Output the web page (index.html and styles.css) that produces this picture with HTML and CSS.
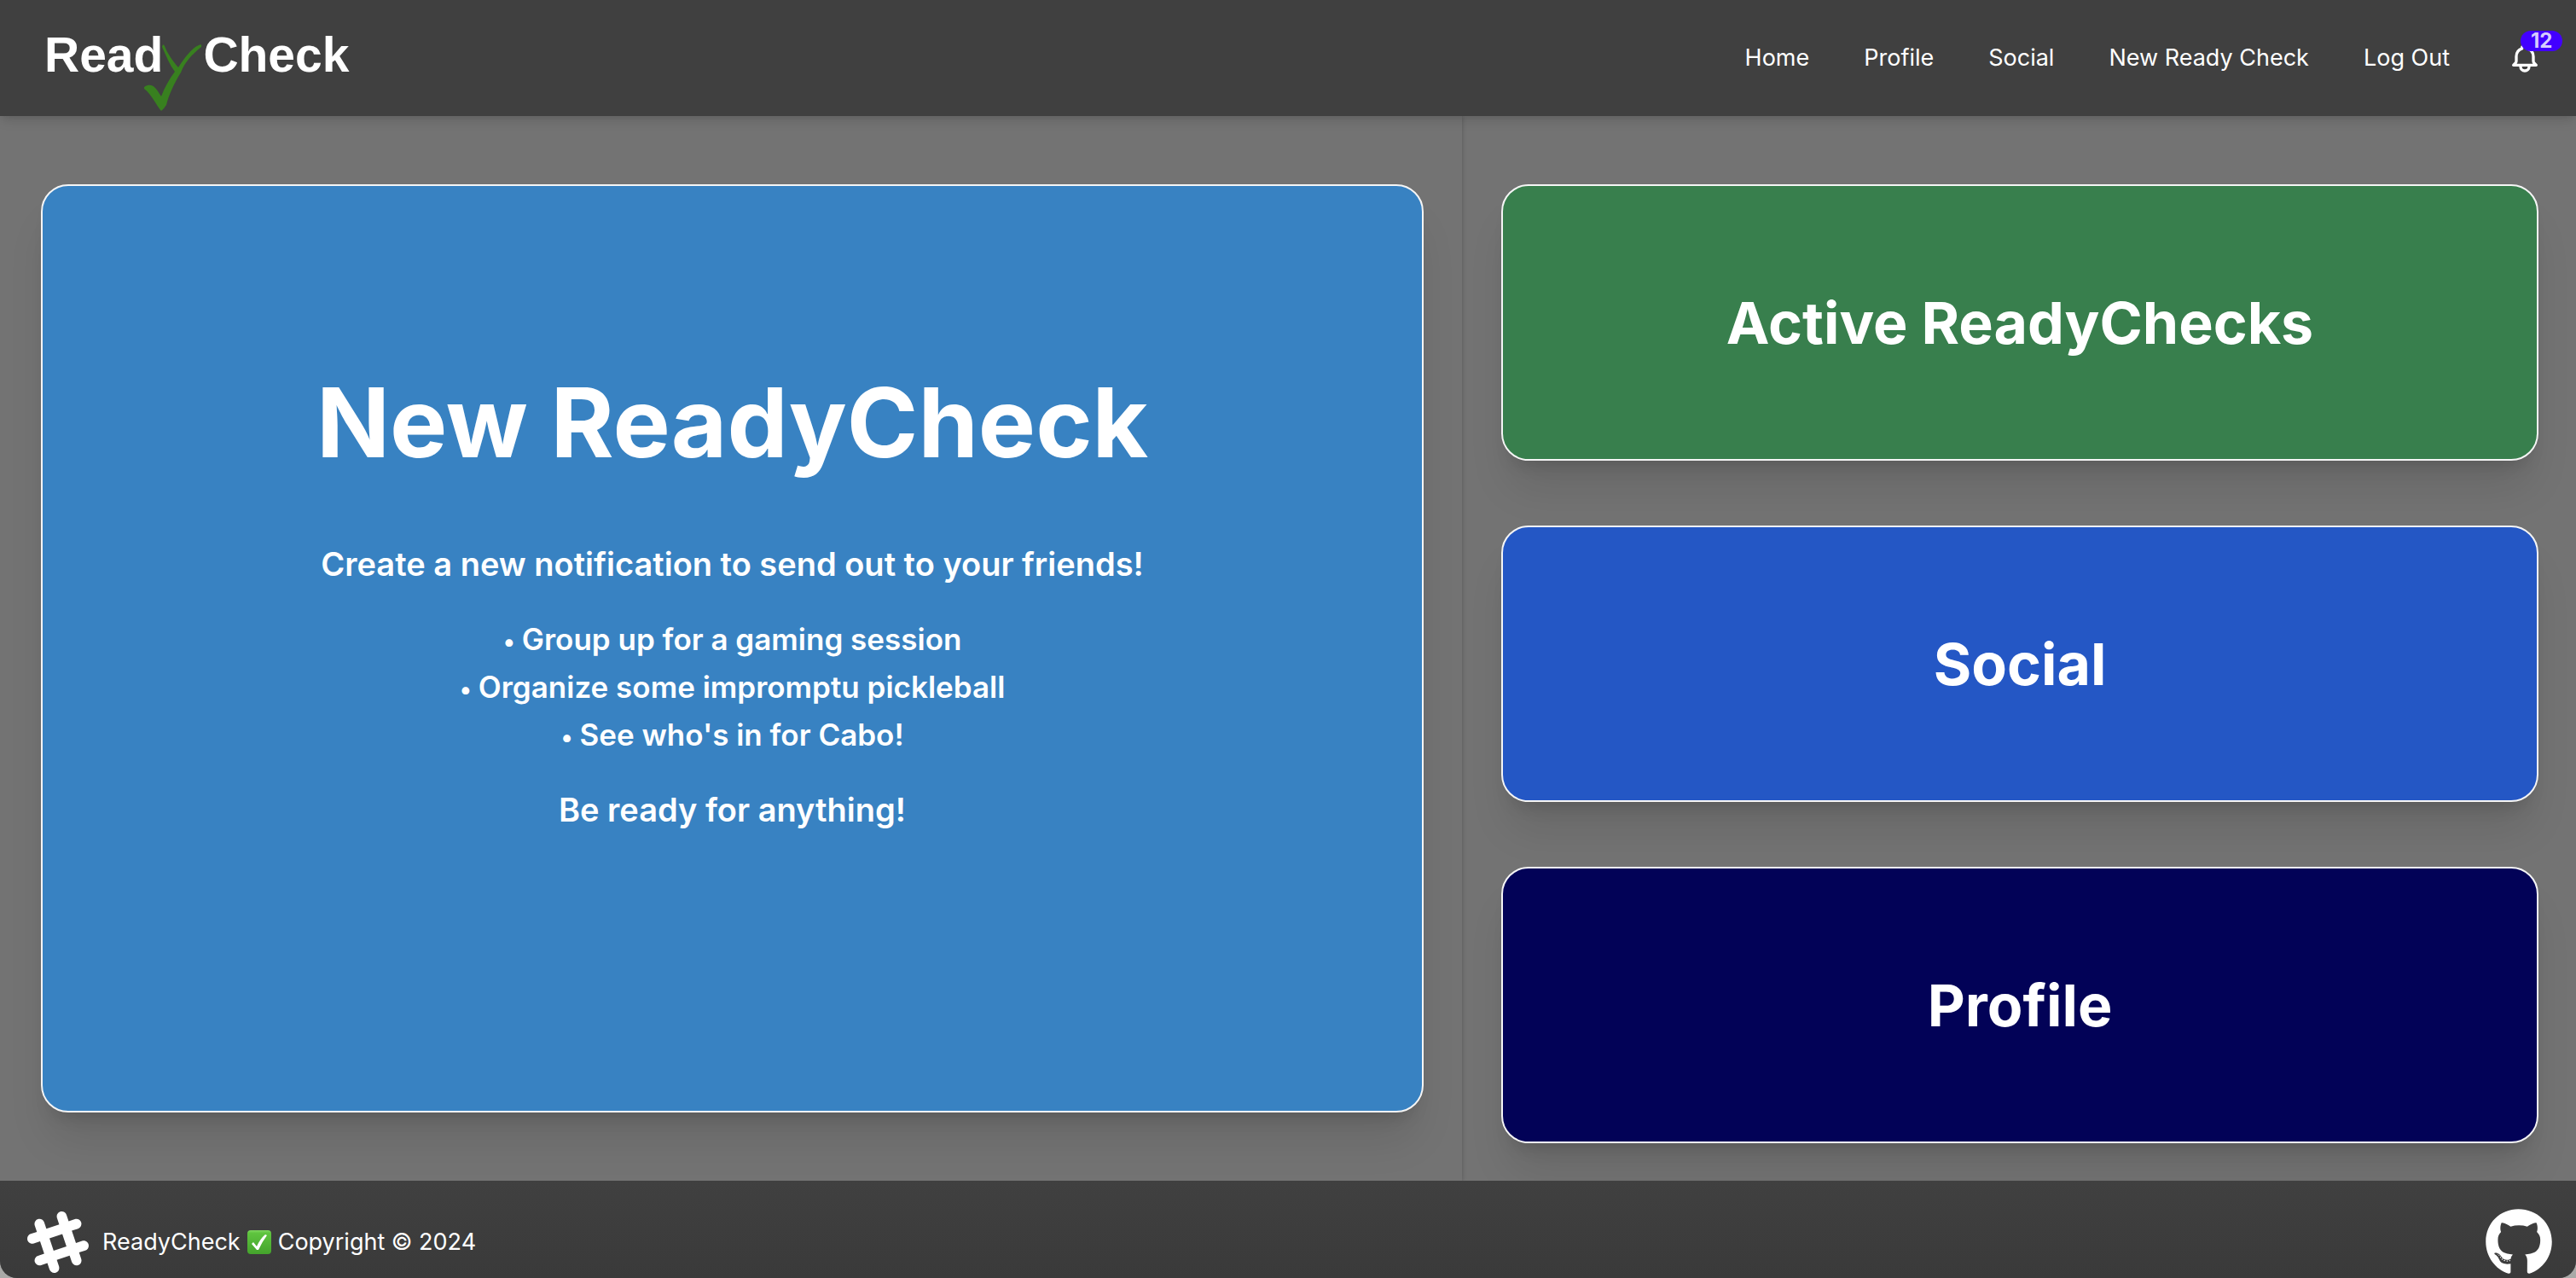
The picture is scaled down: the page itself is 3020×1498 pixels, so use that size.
FILE: index.html
```html
<!DOCTYPE html>
<html lang="en">
<head>
  <meta charset="utf-8">
  <meta name="viewport" content="width=device-width, initial-scale=1">
  <title>ReadyCheck</title>
  <link rel="stylesheet" href="styles.css">
</head>
<body>
<div class="page">
  <header class="navbar">
    <a class="logo" href="#" aria-label="ReadyCheck">
      <span>Read</span>
      <svg class="logo-mark" viewBox="0 0 69 82" aria-hidden="true">
        <path d="M21 5 Q22 0 24 4 C27 12 33 21 40 29 C48 17 56 6 64 3 Q68 1 67 5 C56 14 48 22 43 35 C35 48 29 61 26 73 Q23 78 20 80 C14 73 9 61 0 54 Q-1 51 4 50 C11 48 15 55 20 63 C24 52 30 42 36 34 C30 26 26 16 21 5Z"/>
      </svg>
      <span>Check</span>
    </a>
    <nav class="menu" aria-label="Main">
      <a href="#">Home</a>
      <a href="#">Profile</a>
      <a href="#">Social</a>
      <a href="#">New Ready Check</a>
      <a href="#">Log Out</a>
      <button class="bell" type="button" aria-label="Notifications">
        <svg viewBox="0 0 24 24" aria-hidden="true"><path d="M15 17h5l-1.405-1.405A2.032 2.032 0 0118 14.158V11a6.002 6.002 0 00-4-5.659V5a2 2 0 10-4 0v.341C7.67 6.165 6 8.388 6 11v3.159c0 .538-.214 1.055-.595 1.436L4 17h5m6 0v1a3 3 0 11-6 0v-1m6 0H9"/></svg>
        <span class="badge">12</span>
      </button>
    </nav>
  </header>

  <main class="content">
    <section class="primary">
      <a class="card card-new" href="#">
        <h1>New ReadyCheck</h1>
        <p>Create a new notification to send out to your friends!</p>
        <ul>
          <li>Group up for a gaming session</li>
          <li>Organize some impromptu pickleball</li>
          <li>See who's in for Cabo!</li>
        </ul>
        <p>Be ready for anything!</p>
      </a>
    </section>
    <section class="secondary">
      <a class="card card-active" href="#"><h2>Active ReadyChecks</h2></a>
      <a class="card card-social" href="#"><h2>Social</h2></a>
      <a class="card card-profile" href="#"><h2>Profile</h2></a>
    </section>
  </main>

  <footer class="footer">
    <div class="copyright">
      <svg class="hash" viewBox="0 0 24 24" aria-hidden="true"><path fill-rule="evenodd" d="M22.672 15.226l-2.432.811.841 2.515c.33 1.019-.209 2.127-1.23 2.456-1.15.325-2.148-.321-2.463-1.226l-.84-2.518-5.013 1.677.84 2.517c.391 1.203-.434 2.542-1.831 2.542-.88 0-1.601-.564-1.86-1.314l-.842-2.516-2.431.809c-1.135.328-2.145-.317-2.463-1.229-.329-1.018.211-2.127 1.231-2.456l2.432-.809-1.621-4.823-2.432.808c-1.355.384-2.558-.59-2.558-1.839 0-.817.509-1.582 1.327-1.846l2.433-.809-.842-2.515c-.33-1.02.211-2.129 1.232-2.458 1.02-.329 2.13.209 2.461 1.229l.842 2.515 5.011-1.677-.839-2.517c-.403-1.238.484-2.553 1.843-2.553.819 0 1.585.509 1.85 1.326l.841 2.517 2.431-.81c1.02-.33 2.131.211 2.461 1.229.332 1.018-.21 2.126-1.23 2.456l-2.433.809 1.622 4.823 2.433-.809c1.242-.401 2.557.484 2.557 1.838 0 .819-.51 1.583-1.328 1.847m-8.992-6.428l-5.01 1.675 1.619 4.828 5.011-1.674-1.62-4.829z"/></svg>
      <p>
        <span>ReadyCheck</span>
        <svg class="tick" viewBox="0 0 28 28" role="img" aria-label="check mark">
          <defs><linearGradient id="tick-fill" x1="0" y1="0" x2="0" y2="1"><stop offset="0" stop-color="#7fd860"/><stop offset=".12" stop-color="#5fc43f"/><stop offset="1" stop-color="#44a32c"/></linearGradient></defs>
          <rect width="28" height="28" rx="4" fill="url(#tick-fill)"/>
          <path d="M21 5 L23 6 Q17 14 13 23 L11 23 L5 16 L7 14 L11 19 Q15 10 21 5Z" fill="#fff"/>
        </svg>
        <span>Copyright © 2024</span>
      </p>
    </div>
    <a class="github" href="#" aria-label="GitHub">
      <svg viewBox="0 0 496 512" aria-hidden="true"><path d="M165.9 397.4c0 2-2.3 3.6-5.2 3.6-3.3.3-5.6-1.3-5.6-3.6 0-2 2.3-3.6 5.2-3.6 3-.3 5.6 1.3 5.6 3.6zm-31.1-4.5c-.7 2 1.3 4.3 4.3 4.9 2.6 1 5.6 0 6.2-2s-1.3-4.3-4.3-5.2c-2.6-.7-5.5.3-6.2 2.3zm44.2-1.7c-2.9.7-4.9 2.6-4.6 4.9.3 2 2.9 3.3 5.9 2.6 2.9-.7 4.9-2.6 4.6-4.6-.3-1.9-3-3.2-5.9-2.9zM244.8 8C106.1 8 0 113.3 0 252c0 110.9 69.8 205.8 169.5 239.2 12.8 2.3 17.3-5.6 17.3-12.1 0-6.2-.3-40.4-.3-61.4 0 0-70 15-84.7-29.8 0 0-11.4-29.1-27.8-36.6 0 0-22.9-15.7 1.6-15.4 0 0 24.9 2 38.6 25.8 21.9 38.6 58.6 27.5 72.9 20.9 2.3-16 8.8-27.1 16-33.7-55.9-6.2-112.3-14.3-112.3-110.5 0-27.5 7.6-41.3 23.6-58.9-2.6-6.5-11.1-33.3 2.6-67.9 20.9-6.5 69 27 69 27 20-5.6 41.5-8.5 62.8-8.5s42.8 2.9 62.8 8.5c0 0 48.1-33.6 69-27 13.7 34.7 5.2 61.4 2.6 67.9 16 17.7 25.8 31.5 25.8 58.9 0 96.5-58.9 104.2-114.8 110.5 9.2 7.9 17 22.9 17 46.4 0 33.7-.3 75.4-.3 83.6 0 6.5 4.6 14.4 17.3 12.1C428.2 457.8 496 362.9 496 252 496 113.3 383.5 8 244.8 8zM97.2 352.9c-1.3 1-1 3.3.7 5.2 1.6 1.6 3.9 2.3 5.2 1 1.3-1 1-3.3-.7-5.2-1.6-1.6-3.9-2.3-5.2-1zm-10.8-8.1c-.7 1.3.3 2.9 2.3 3.9 1.6 1 3.6.7 4.3-.7.7-1.3-.3-2.9-2.3-3.9-2-.6-3.6-.3-4.3.7zm32.4 35.6c-1.6 1.3-1 4.3 1.3 6.2 2.3 2.3 5.2 2.6 6.5 1 1.3-1.3.7-4.3-1.3-6.2-2.2-2.3-5.2-2.6-6.5-1zm-11.4-14.7c-1.6 1-1.6 3.6 0 5.9 1.6 2.3 4.3 3.3 5.6 2.3 1.6-1.3 1.6-3.9 0-6.2-1.4-2.3-4-3.3-5.6-2z"/></svg>
    </a>
  </footer>
</div>
</body>
</html>
```
FILE: styles.css
```css
*,
*::before,
*::after {
  box-sizing: border-box;
}

html {
  background: #a9a9a7;
}

body {
  margin: 0;
  font-family: Inter, "Liberation Sans", sans-serif;
  font-size: 27px;
  line-height: 40px;
  color: #fff;
}

h1, h2, p, ul {
  margin: 0;
  padding: 0;
}

a {
  color: inherit;
  text-decoration: none;
}

svg {
  display: block;
  fill: currentColor;
}

.page {
  display: flex;
  flex-direction: column;
  min-height: 100vh;
  overflow: hidden;
  background: #737373;
  border-radius: 0 0 20px 20px;
}

/* Header */

.navbar {
  position: relative;
  display: flex;
  align-items: center;
  justify-content: space-between;
  height: 136px;
  padding: 0 40px 0 52px;
  background: #404040;
  box-shadow: 0 8px 12px -2px rgba(0, 0, 0, 0.1), 0 4px 8px -4px rgba(0, 0, 0, 0.1);
}

.logo {
  display: flex;
  align-items: flex-start;
  height: 104px;
  padding-top: 16px;
  font: bold 57px/64px "Liberation Sans", Arial, sans-serif;
}

.logo-mark {
  width: 69px;
  height: 82px;
  margin: 18px 0 0 -22px;
  fill: #38801f;
}

.menu {
  display: flex;
  align-items: center;
  gap: 64px;
}

.bell {
  position: relative;
  margin-left: 4px;
  padding: 0;
  border: 0;
  background: none;
  color: #fff;
}

.bell svg {
  width: 40px;
  height: 40px;
  fill: none;
  stroke: currentColor;
  stroke-width: 2;
  stroke-linecap: round;
  stroke-linejoin: round;
}

.badge {
  position: absolute;
  top: -12px;
  left: 15px;
  padding: 0 12px;
  border-radius: 12px;
  background: #4200ff;
  color: #d6ccff;
  font: 700 24px/24px Inter, sans-serif;
}

/* Cards */

.content {
  flex: 1;
  display: grid;
  grid-template-columns: 21fr 16fr;
}

.primary {
  display: flex;
  padding: 80px 45px 80px 48px;
  box-shadow: 0 0 5px rgba(0, 0, 0, 0.25);
}

.secondary {
  display: flex;
  flex-direction: column;
  gap: 76px;
  padding: 80px 44px 44px 46px;
}

.card {
  display: flex;
  flex: 1;
  flex-direction: column;
  align-items: center;
  justify-content: center;
  min-height: 324px;
  border: 2px solid #f5f5f5;
  border-radius: 32px;
  text-align: center;
  font-weight: 600;
  box-shadow: 0 40px 50px -10px rgba(0, 0, 0, 0.1), 0 16px 20px -12px rgba(0, 0, 0, 0.15);
}

.card-new {
  padding-bottom: 108px;
  background: #3882c2;
  font-size: 38px;
  line-height: 56px;
}

.card-active {
  background: #387f4d;
}

.card-social {
  background: #2457c5;
}

.card-profile {
  background: #020257;
}

h1 {
  margin-bottom: 78px;
  font-size: 113px;
  line-height: 120px;
  font-weight: 700;
}

h2 {
  font-size: 68px;
  line-height: 80px;
  font-weight: 700;
}

.card-new ul {
  margin: 32px 0;
  font-size: 35px;
  list-style: none;
}

.card-new li::before {
  content: "•";
  margin-right: 8px;
  font-size: 28px;
  line-height: 28px;
}

/* Footer */

.footer {
  display: flex;
  align-items: center;
  justify-content: space-between;
  padding: 32px 28px 2px 32px;
  background: linear-gradient(#404040, #3a3a3a);
}

.copyright,
.copyright p {
  display: flex;
  align-items: center;
}

.copyright {
  gap: 16px;
}

.copyright p {
  gap: 8px;
}

.hash {
  width: 72px;
  height: 72px;
}

.tick {
  width: 28px;
  height: 28px;
}

.github svg {
  width: 78px;
  height: 80px;
}
```
